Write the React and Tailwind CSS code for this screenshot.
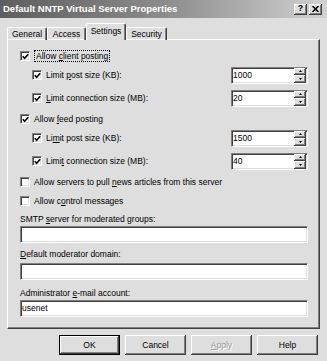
import React from "react";

const sunken =
  "border border-t-[#808080] border-l-[#808080] border-b-white border-r-white shadow-[inset_1px_1px_0_#404040,inset_-1px_-1px_0_#dedede]";
const raised =
  "bg-[#dedede] shadow-[inset_-1px_-1px_0_#404040,inset_1px_1px_0_#ffffff,inset_-2px_-2px_0_#808080]";

const Check = ({ checked = false }) => (
  <span className={`w-[10px] h-[10px] bg-white flex items-center justify-center shrink-0 ${sunken}`}>
    {checked && (
      <svg width="7" height="7" viewBox="0 0 7 7">
        <path d="M0.8 3.2 L2.6 5.2 L6.2 1.2" fill="none" stroke="#000" strokeWidth="1.6" />
      </svg>
    )}
  </span>
);

const Spin = ({ value }) => (
  <div className={`w-[77px] h-[17px] bg-white flex items-center ${sunken}`}>
    <span className="flex-1 pl-[1px] leading-none">{value}</span>
    <div className="flex flex-col w-[12px] h-[15px] mr-[1px]">
      <div className={`h-[7px] flex items-center justify-center ${raised}`}>
        <svg width="3" height="2" viewBox="0 0 3 2">
          <path d="M1.5 0 L3 2 L0 2 Z" fill="#000" />
        </svg>
      </div>
      <div className={`h-[8px] flex items-center justify-center ${raised}`}>
        <svg width="3" height="2" viewBox="0 0 3 2">
          <path d="M0 0 L3 0 L1.5 2 Z" fill="#000" />
        </svg>
      </div>
    </div>
  </div>
);

const Row = ({ children, className = "", indent = false, input }) => (
  <div className={`h-[18px] flex items-center ${indent ? "pl-[12px]" : ""} ${className}`}>
    <div className="flex items-center gap-[4px] flex-1">{children}</div>
    {input}
  </div>
);

const Tab = ({ label, active, className = "" }) => (
  <div
    className={`flex items-center justify-center rounded-t-[2px] border-t border-l border-white border-r border-r-[#404040] shadow-[inset_-1px_0_0_#808080] ${
      active ? "h-[17px] bg-[#dedede] relative z-10 pb-[2px]" : "h-[13px]"
    } ${className}`}
  >
    {label}
  </div>
);

const Button = ({ children, isDefault, disabled }) => (
  <div
    className={`w-[61px] h-[20px] flex items-center justify-center ${raised} ${
      isDefault ? "outline outline-1 outline-black -outline-offset-1 shadow-[inset_-2px_-2px_0_#404040,inset_2px_2px_0_#ffffff,inset_-3px_-3px_0_#808080]" : ""
    } ${disabled ? "text-[#9a9a9a] [text-shadow:1px_1px_0_#ffffff]" : ""}`}
  >
    <span>{children}</span>
  </div>
);

export default function App() {
  return (
    <div className="w-[327px] h-[361px] bg-[#dedede] flex flex-col text-[8.5px] text-black font-['Liberation_Sans',Arial,sans-serif] overflow-hidden">
      <div className="h-[18px] flex items-center pl-[3px] pr-[5px] bg-linear-to-r from-[#5e5e5e] via-[#8c8c8c] to-[#d2d2d2]">
        <span className="flex-1 text-white font-bold text-[9.5px]">Default NNTP Virtual Server Properties</span>
        <div className="flex gap-[2px]">
          <div className={`w-[13px] h-[11px] flex items-center justify-center font-bold text-[9px] ${raised}`}>?</div>
          <div className={`w-[13px] h-[11px] flex items-center justify-center ${raised}`}>
            <svg width="7" height="6" viewBox="0 0 7 6">
              <path d="M0.5 0 L6.5 6 M6.5 0 L0.5 6" stroke="#000" strokeWidth="1.5" />
            </svg>
          </div>
        </div>
      </div>

      <div className="flex items-end h-[17px] mt-[5px] pl-[7px] relative z-10">
        <Tab label="General" className="w-[40px]" />
        <Tab label="Access" className="w-[39px]" />
        <Tab label="Settings" active className="w-[40px]" />
        <Tab label="Security" className="w-[41px]" />
      </div>

      <div className="mx-[7px] -mt-[1px] h-[290px] border border-t-white border-l-white border-r-[#404040] border-b-[#404040] shadow-[inset_-1px_-1px_0_#808080] flex flex-col pl-[12px] pr-[11px]">
        <Row className="mt-[7px]">
          <Check checked />
          <span className="border border-dotted border-black px-[1px] leading-[10px]">
            Allow <u>c</u>lient posting
          </span>
        </Row>
        <Row indent className="mt-[1px]" input={<Spin value="1000" />}>
          <Check checked />
          <span>Limit <u>p</u>ost size (KB):</span>
        </Row>
        <Row indent className="mt-[5px]" input={<Spin value="20" />}>
          <Check checked />
          <span><u>L</u>imit connection size (MB):</span>
        </Row>
        <Row className="mt-[3px]">
          <Check checked />
          <span>Allow <u>f</u>eed posting</span>
        </Row>
        <Row indent className="mt-[1px]" input={<Spin value="1500" />}>
          <Check checked />
          <span>Li<u>m</u>it post size (KB):</span>
        </Row>
        <Row indent className="mt-[5px]" input={<Spin value="40" />}>
          <Check checked />
          <span>Limi<u>t</u> connection size (MB):</span>
        </Row>
        <Row className="mt-[3px]">
          <Check />
          <span>Allow servers to pull <u>n</u>ews articles from this server</span>
        </Row>
        <Row className="mt-[1px]">
          <Check />
          <span>Allow c<u>o</u>ntrol messages</span>
        </Row>

        <div className="h-[12px] mt-[3px] flex items-center">
          <span>SMTP <u>s</u>erver for moderated groups:</span>
        </div>
        <div className={`h-[17px] mt-[1px] bg-white ${sunken}`} />
        <div className="h-[12px] mt-[5px] flex items-center">
          <span><u>D</u>efault moderator domain:</span>
        </div>
        <div className={`h-[17px] mt-[3px] bg-white ${sunken}`} />
        <div className="h-[12px] mt-[7px] flex items-center">
          <span>Administrator <u>e</u>-mail account:</span>
        </div>
        <div className={`h-[17px] mt-[1px] bg-white flex items-center pl-[1px] ${sunken}`}>usenet</div>
      </div>

      <div className="flex justify-end gap-[5px] mt-[6px] pr-[9px]">
        <Button isDefault>OK</Button>
        <Button>Cancel</Button>
        <Button disabled><u>A</u>pply</Button>
        <Button>Help</Button>
      </div>
    </div>
  );
}
